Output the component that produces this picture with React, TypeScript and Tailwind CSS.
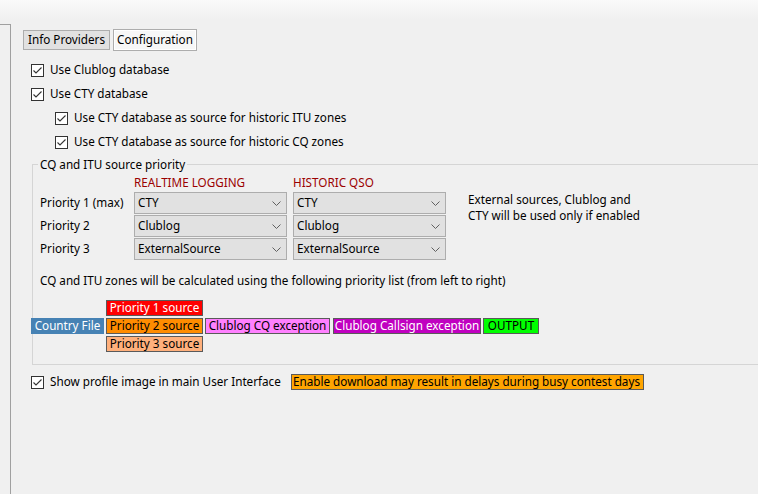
import React from 'react'

type BoxProps = {
  label: string
  width: string
  tone: string
}

function CheckBox({ label }: { label: string }) {
  return (
    <div className="flex h-[24px] items-center">
      <span className="flex h-[13px] w-[13px] items-center justify-center border border-[#333333] bg-white">
        <svg viewBox="0 0 11 11" className="h-[11px] w-[11px]">
          <polyline
            points="1.5,5.5 4,8 9.5,2.5"
            fill="none"
            stroke="#333333"
            strokeWidth="1.1"
          />
        </svg>
      </span>
      <span className="ml-[6px] whitespace-nowrap">{label}</span>
    </div>
  )
}

function Combo({ value }: { value: string }) {
  return (
    <div className="flex h-[22px] w-full items-center justify-between border border-[#adadad] bg-[#e1e1e1] pl-[3px] pr-[5px]">
      <span>{value}</span>
      <svg viewBox="0 0 9 5" className="h-[5px] w-[9px]">
        <polyline points="0.5,0.5 4.5,4.5 8.5,0.5" fill="none" stroke="#606060" strokeWidth="1" />
      </svg>
    </div>
  )
}

function ZoneBox({ label, width, tone }: BoxProps) {
  return (
    <div
      className={`flex h-[16px] items-center justify-center whitespace-nowrap border leading-none ${width} ${tone}`}
    >
      {label}
    </div>
  )
}

const priorities = [
  { label: 'Priority 1 (max)', realtime: 'CTY', historic: 'CTY' },
  { label: 'Priority 2', realtime: 'Clublog', historic: 'Clublog' },
  { label: 'Priority 3', realtime: 'ExternalSource', historic: 'ExternalSource' },
]

export default function App() {
  return (
    <div className="flex h-[494px] w-[758px] flex-col overflow-hidden bg-[#f0f0f0] font-['Noto_Sans',sans-serif] text-[11.7px] text-black">
      <div className="h-[20px] shrink-0 bg-linear-to-b from-[#fafafa] to-[#f0f0f0]" />
      <div className="mt-[4px] flex flex-1">
        <div className="w-[11px] shrink-0 border-t border-r border-[#a0a0a0]" />
        <div className="flex flex-1 flex-col">
          <div className="flex items-end gap-[3px] pl-[12px] pt-[5px]">
            <div className="mb-[1px] flex h-[20px] w-[87px] items-center justify-center border border-[#adadad] bg-[#e1e1e1]">
              Info Providers
            </div>
            <div className="flex h-[22px] w-[84px] items-center justify-center border border-[#adadad] bg-[#f7f7f7] shadow-[inset_0_0_0_1px_#ffffff]">
              Configuration
            </div>
          </div>

          <div className="flex flex-col pl-[20px]">
            <div className="mt-[7px]">
              <CheckBox label="Use Clublog database" />
              <CheckBox label="Use CTY database" />
              <div className="pl-[24px]">
                <CheckBox label="Use CTY database as source for historic ITU zones" />
                <CheckBox label="Use CTY database as source for historic CQ zones" />
              </div>
            </div>

            <fieldset className="mt-[2px] ml-[1px] w-[800px] border-t border-b border-l border-[#d5d5d5] pb-[12px] pl-[7px]">
              <legend className="-ml-[2px] px-[2px] leading-[16px]">CQ and ITU source priority</legend>

              <div className="mt-[2px] flex">
                <div className="flex w-[94px] flex-col">
                  <div className="mb-[2px] h-[16px]" />
                  <div className="flex flex-col gap-[1px]">
                    {priorities.map((row) => (
                      <div key={row.label} className="flex h-[22px] items-center whitespace-nowrap">
                        {row.label}
                      </div>
                    ))}
                  </div>
                </div>
                <div className="flex w-[153px] flex-col">
                  <div className="mb-[2px] h-[16px] leading-[16px] text-[#9b0000]">REALTIME LOGGING</div>
                  <div className="flex flex-col gap-[1px]">
                    {priorities.map((row) => (
                      <Combo key={row.label} value={row.realtime} />
                    ))}
                  </div>
                </div>
                <div className="ml-[6px] flex w-[153px] flex-col">
                  <div className="mb-[2px] h-[16px] leading-[16px] text-[#9b0000]">HISTORIC QSO</div>
                  <div className="flex flex-col gap-[1px]">
                    {priorities.map((row) => (
                      <Combo key={row.label} value={row.historic} />
                    ))}
                  </div>
                </div>
                <div className="ml-[22px] mt-[17px] leading-[16px]">
                  <div>External sources, Clublog and</div>
                  <div>CTY will be used only if enabled</div>
                </div>
              </div>

              <div className="mt-[12px] leading-[16px]">
                CQ and ITU zones will be calculated using the following priority list (from left to right)
              </div>

              <div className="mt-[12px] -ml-[9px] flex items-center gap-[2px]">
                <ZoneBox label="Country File" width="w-[73px]" tone="border-[#4682b4] bg-[#4682b4] text-white" />
                <div className="flex flex-col gap-[2px]">
                  <ZoneBox label="Priority 1 source" width="w-[97px]" tone="border-[#5a5a5a] bg-[#ff0000] text-white" />
                  <ZoneBox label="Priority 2 source" width="w-[97px]" tone="border-[#5a5a5a] bg-[#ff8c00]" />
                  <ZoneBox label="Priority 3 source" width="w-[97px]" tone="border-[#5a5a5a] bg-[#ffb07c]" />
                </div>
                <ZoneBox label="Clublog CQ exception" width="w-[125px]" tone="border-[#5a5a5a] bg-[#ff80ff]" />
                <div className="ml-[1px]">
                  <ZoneBox label="Clublog Callsign exception" width="w-[148px]" tone="border-[#5a5a5a] bg-[#c000c0] text-white" />
                </div>
                <ZoneBox label="OUTPUT" width="w-[56px]" tone="border-[#5a5a5a] bg-[#00ff00]" />
              </div>
            </fieldset>

            <div className="mt-[7px] flex h-[20px] items-center">
              <div className="w-[260px]">
                <CheckBox label="Show profile image in main User Interface" />
              </div>
              <div className="flex h-[16px] w-[353px] items-center border border-[#5a5a5a] bg-[#ffa500] pl-[1px] leading-none whitespace-nowrap">
                Enable download may result in delays during busy contest days
              </div>
            </div>
          </div>
        </div>
      </div>
    </div>
  )
}
